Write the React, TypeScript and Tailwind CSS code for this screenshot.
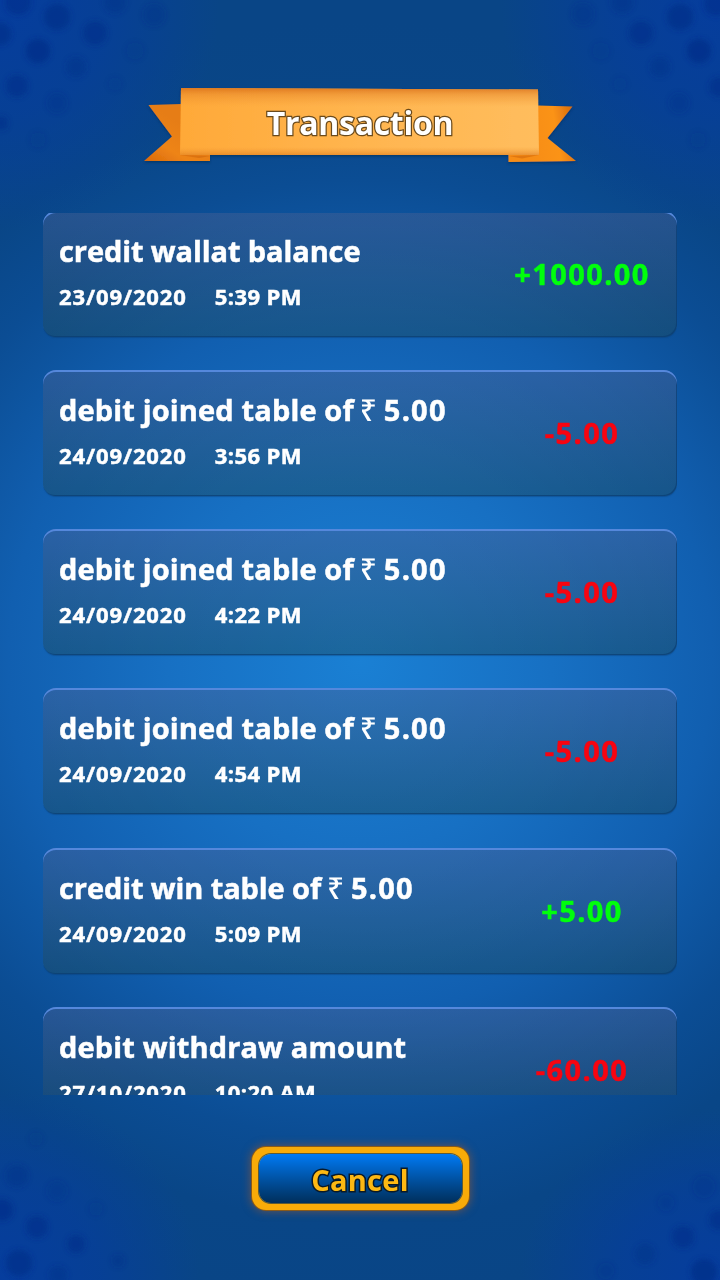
interface Transaction {
  id: number;
  label: string;
  rupees?: string;
  date: string;
  time: string;
  amount: string;
}

const transactions: Transaction[] = [
  { id: 1, label: "credit wallat balance", date: "23/09/2020", time: "5:39 PM", amount: "+1000.00" },
  { id: 2, label: "debit joined table of", rupees: "5.00", date: "24/09/2020", time: "3:56 PM", amount: "-5.00" },
  { id: 3, label: "debit joined table of", rupees: "5.00", date: "24/09/2020", time: "4:22 PM", amount: "-5.00" },
  { id: 4, label: "debit joined table of", rupees: "5.00", date: "24/09/2020", time: "4:54 PM", amount: "-5.00" },
  { id: 5, label: "credit win table of", rupees: "5.00", date: "24/09/2020", time: "5:09 PM", amount: "+5.00" },
  { id: 6, label: "debit withdraw amount", date: "27/10/2020", time: "10:20 AM", amount: "-60.00" },
];

// x, y, radius, opacity
const dots = [
  [18, 2, 13, 0.5], [57, 17, 13, 0.6], [0, 34, 11, 0.6], [95, 33, 12, 0.5], [38, 51, 12, 0.65],
  [76, 67, 10, 0.4], [17, 86, 11, 0.5], [57, 103, 10, 0.3], [1, 123, 7, 0.5], [154, 15, 11, 0.3],
  [115, 2, 11, 0.4], [135, 51, 9, 0.12], [115, 84, 7, 0.1], [38, 140, 8, 0.12],
  [583, 14, 11, 0.3], [622, 2, 11, 0.4], [641, 33, 12, 0.5], [680, 17, 13, 0.6], [716, 4, 12, 0.5],
  [699, 51, 12, 0.65], [660, 67, 10, 0.4], [719, 87, 10, 0.5], [679, 103, 10, 0.3], [601, 51, 9, 0.12],
  [698, 140, 8, 0.12], [620, 84, 7, 0.1],
  [36, 1139, 7, 0.12], [17, 1176, 11, 0.4], [57, 1191, 10, 0.25], [2, 1210, 11, 0.55], [96, 1209, 7, 0.12],
  [37, 1227, 11, 0.5], [76, 1244, 9, 0.5], [19, 1263, 13, 0.6], [118, 1261, 6, 0.35], [58, 1275, 9, 0.4],
  [704, 1187, 11, 0.2], [666, 1203, 8, 0.18], [719, 1220, 10, 0.5], [683, 1237, 11, 0.5],
  [645, 1254, 10, 0.38], [704, 1272, 13, 0.7], [606, 1271, 8, 0.2],
];

function Backdrop() {
  return (
    <svg className="absolute inset-0 h-full w-full" viewBox="0 0 720 1280" aria-hidden="true">
      <defs>
        <radialGradient id="glow" gradientUnits="userSpaceOnUse" cx="360" cy="660" r="640">
          <stop offset="0" stopColor="#1a80d4" />
          <stop offset="0.3" stopColor="#1770c3" />
          <stop offset="0.55" stopColor="#115fb0" />
          <stop offset="0.75" stopColor="#0b4d94" />
          <stop offset="0.88" stopColor="#094687" />
          <stop offset="1" stopColor="#094586" />
        </radialGradient>
        <radialGradient id="corner">
          <stop offset="0" stopColor="#053ca0" stopOpacity="0.9" />
          <stop offset="0.5" stopColor="#053ca0" stopOpacity="0.6" />
          <stop offset="1" stopColor="#053ca0" stopOpacity="0" />
        </radialGradient>
        <filter id="soften">
          <feGaussianBlur stdDeviation="2.4" />
        </filter>
      </defs>
      <rect width="720" height="1280" fill="url(#glow)" />
      <ellipse cx="0" cy="0" rx="220" ry="230" fill="url(#corner)" />
      <ellipse cx="720" cy="0" rx="220" ry="230" fill="url(#corner)" />
      <ellipse cx="0" cy="1280" rx="200" ry="190" fill="url(#corner)" />
      <ellipse cx="720" cy="1280" rx="200" ry="170" fill="url(#corner)" />
      <g fill="#032c87" filter="url(#soften)">
        {dots.map(([x, y, r, o], i) => (
          <circle key={i} cx={x} cy={y} r={r} opacity={o} />
        ))}
      </g>
    </svg>
  );
}

function Ribbon({ title }: { title: string }) {
  return (
    <div className="relative flex h-[80px] w-[440px] items-center justify-center">
      <svg className="absolute inset-0" width="440" height="80" viewBox="140 86 440 80" aria-hidden="true">
        <defs>
          <linearGradient id="band" x1="0" x2="1" y1="0" y2="0">
            <stop offset="0" stopColor="#ffa938" />
            <stop offset="0.5" stopColor="#ffb54f" />
            <stop offset="1" stopColor="#ffbd5d" />
          </linearGradient>
          <linearGradient id="bandShade" x1="0" x2="0" y1="0" y2="1">
            <stop offset="0" stopColor="#d9701a" stopOpacity="0.85" />
            <stop offset="0.1" stopColor="#e58427" stopOpacity="0.5" />
            <stop offset="0.28" stopColor="#f09433" stopOpacity="0" />
            <stop offset="0.88" stopColor="#f09433" stopOpacity="0" />
            <stop offset="1" stopColor="#dd7a1c" stopOpacity="0.6" />
          </linearGradient>
          <linearGradient id="tailLeft" x1="0" x2="0.5" y1="1" y2="0.3">
            <stop offset="0" stopColor="#d9690a" />
            <stop offset="0.45" stopColor="#ee8417" />
            <stop offset="1" stopColor="#e67d14" />
          </linearGradient>
          <linearGradient id="tailRight" x1="0.3" x2="1" y1="0.6" y2="0.5">
            <stop offset="0" stopColor="#f78d17" />
            <stop offset="0.6" stopColor="#fb9319" />
            <stop offset="1" stopColor="#da6e0b" />
          </linearGradient>
          <filter id="ribbonShadow" x="-5%" y="-10%" width="110%" height="130%">
            <feDropShadow dx="0" dy="1.5" stdDeviation="1.2" floodColor="#032a55" floodOpacity="0.6" />
          </filter>
        </defs>
        <g filter="url(#ribbonShadow)">
          <path d="M148.5 105 L182 104 V154 L210 155 V161 H144 L172 136.500 Z" fill="url(#tailLeft)" />
          <path d="M537 105.500 L572.500 106.500 L547.500 138 L576 161 L508.500 162 V155 L537 154 Z" fill="url(#tailRight)" />
          <path d="M181 88 L538 89.500 L539 155 H180 Z" fill="url(#band)" />
          <path d="M181 88 L538 89.500 L539 155 H180 Z" fill="url(#bandShade)" />
        </g>
        <path d="M180 155 L210 156 L199 158 Z" fill="#c9610a" opacity="0.5" />
        <path d="M539 155 L509 156 L522 158.500 Z" fill="#c9610a" opacity="0.5" />
      </svg>
      <h1 className="relative -top-[3px] text-[32px] leading-none font-bold tracking-[-0.3px] text-white [-webkit-text-stroke:2.5px_#6a4a1c] [paint-order:stroke_fill]">
        {title}
      </h1>
    </div>
  );
}

function TransactionCard({ label, rupees, date, time, amount }: Omit<Transaction, "id">) {
  const isCredit = amount.startsWith("+");

  return (
    <li className="flex h-[126px] shrink-0 items-center justify-between rounded-[13px] bg-linear-to-b from-[#4a6296]/45 to-[#1c4a5c]/45 pl-4 shadow-[inset_0_2px_0_#5588dc,inset_-1px_-1px_0_#0b3c70aa,0_1px_1px_#0b3c7066]">
      <div className="-mt-[6px] flex flex-col gap-[10px]">
        <p className={`flex items-baseline text-[29px] leading-[40px] font-bold whitespace-pre ${isCredit ? "tracking-[-0.1px]" : "tracking-[0.15px]"}`}>
          {label}
          {rupees && (
            <span className="ml-[6px] w-[17px] font-['Noto_Sans'] text-[30px] leading-none font-medium [-webkit-text-stroke:0]">
              ₹
            </span>
          )}
          {rupees && <span className="ml-[7px] tracking-[1.2px]">{rupees}</span>}
        </p>
        <p className="flex gap-[28px] text-[22px] leading-[30px] font-bold">
          <span className="tracking-[0.9px]">{date}</span>
          <span className="tracking-[0.4px]">{time}</span>
        </p>
      </div>
      <p
        className={`w-[190px] text-center text-[29px] leading-[40px] font-bold tracking-[1.4px] ${
          isCredit ? "text-[#00ff0c]" : "text-[#f80410]"
        }`}
      >
        {amount}
      </p>
    </li>
  );
}

export default function App() {
  return (
    <main className="relative h-[1280px] w-[720px] overflow-hidden bg-[#0a478a] font-['Open_Sans','Noto_Sans',sans-serif] text-white">
      <Backdrop />
      <div className="relative flex h-full flex-col items-center pt-[86px]">
        <Ribbon title="Transaction" />

        <div className="mt-[47px] h-[882px] w-[634px] overflow-hidden">
          <ul className="-mt-[2.5px] flex flex-col gap-[33.3px] [-webkit-text-stroke:0.5px]">
            {transactions.map(({ id, ...transaction }) => (
              <TransactionCard key={id} {...transaction} />
            ))}
          </ul>
        </div>

        <button className="mt-[52px] flex h-[63px] w-[217px] rounded-[14px] bg-[#f9ab08] p-[7px] shadow-[0_0_0_1px_#8a5a1a,0_0_8px_2px_#8c5a3ca0]">
          <span className="flex h-full w-full items-center justify-center rounded-[12px] bg-linear-to-b from-[#007af5] to-[#002f5c] text-[29px] leading-none font-bold tracking-[0.3px] text-[#fdb813] shadow-[0_0_0_1px_#5c5a38] [-webkit-text-stroke:3px_#0a1a28] [paint-order:stroke_fill]">
            <span className="relative top-px">Cancel</span>
          </span>
        </button>
      </div>
    </main>
  );
}
